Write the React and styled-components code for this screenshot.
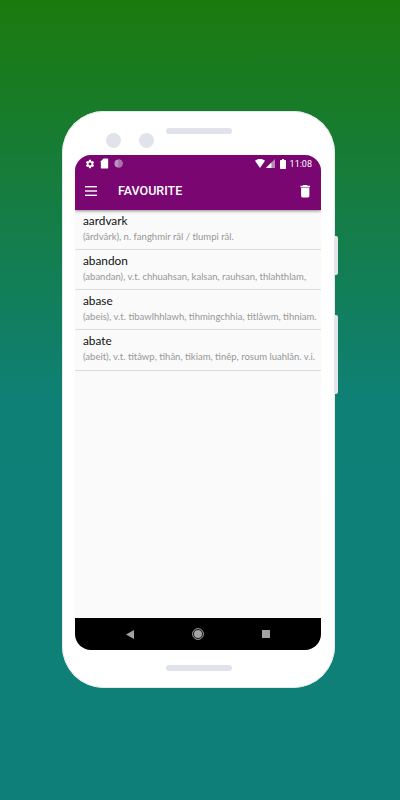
import React from "react";
import styled, { createGlobalStyle } from "styled-components";

const Global = createGlobalStyle`
  html, body {
    margin: 0;
    padding: 0;
  }
  body {
    width: 400px;
    height: 800px;
    overflow: hidden;
    font-family: "Lato", "Liberation Sans", sans-serif;
  }
`;

const Page = styled.div`
  width: 400px;
  height: 800px;
  box-sizing: border-box;
  padding: 111px 0 0 62px;
  background: linear-gradient(180deg, #1b7a0d 0%, #0f8076 50%, #0f8079 100%);
`;

const Phone = styled.div`
  position: relative;
  width: 273px;
  height: 577px;
  box-sizing: border-box;
  padding: 0 14px 0 13px;
  background: #fff;
  border-radius: 42px;
  box-shadow: inset 0 0 0 1px #e6e8ec;
  display: flex;
  flex-direction: column;
`;

const SideButton = styled.div`
  position: absolute;
  right: -3px;
  top: ${(p) => p.$top}px;
  width: 3px;
  height: ${(p) => p.$height}px;
  background: #e3e5ea;
  border-radius: 0 2px 2px 0;
`;

const TopBezel = styled.div`
  height: 44px;
  display: flex;
  align-items: flex-start;
  padding: 17px 0 0 31px;
  box-sizing: border-box;
`;

const BottomBezel = styled.div`
  padding-top: 15px;
  display: flex;
`;

const Camera = styled.div`
  width: 15px;
  height: 15px;
  margin-top: 5px;
  margin-right: 18px;
  border-radius: 50%;
  background: #e0e3e9;
`;

const Speaker = styled.div`
  width: 66px;
  height: 6px;
  background: #e0e3e9;
  border-radius: 3px;
  margin-left: ${(p) => p.$left || 0}px;
`;

const Screen = styled.div`
  width: 246px;
  height: 495px;
  border-radius: 16px;
  overflow: hidden;
  display: flex;
  flex-direction: column;
  background: #fafafa;
`;

const Header = styled.div`
  background: #7a0672;
  box-shadow: 0 1px 3px rgba(0, 0, 0, 0.45);
  position: relative;
  z-index: 1;
`;

const StatusBar = styled.div`
  height: 17px;
  display: flex;
  align-items: center;
  padding: 0 9px 0 10px;
  color: #fff;
  gap: 4px;
`;

const SignalGroup = styled.div`
  display: flex;
  align-items: center;
  gap: 1px;
  margin-right: 1px;
`;

const Clock = styled.span`
  font-family: "Roboto", sans-serif;
  font-size: 9px;
  color: #fff;
`;

const Spacer = styled.div`
  flex: 1;
`;

const Toolbar = styled.div`
  height: 37.5px;
  display: flex;
  align-items: center;
  padding: 0 7.5px 0 10px;
`;

const Title = styled.div`
  font-family: "Roboto", sans-serif;
  font-weight: 500;
  font-size: 12.5px;
  color: #fff;
  margin-left: 21px;
`;

const List = styled.div`
  flex: 1;
  min-height: 0;
`;

const Row = styled.div`
  height: 40.3px;
  box-sizing: border-box;
  padding: 3px 8px 0;
  border-bottom: 1px solid #dddddd;
  overflow: hidden;
`;

const Word = styled.div`
  font-size: 11.8px;
  line-height: 15px;
  color: #111;
  white-space: nowrap;
`;

const Meaning = styled.div`
  font-size: 9.5px;
  line-height: 14px;
  margin-top: 2px;
  color: #979797;
  white-space: nowrap;
`;

const NavBar = styled.div`
  height: 32px;
  background: #000;
  display: flex;
  align-items: center;
  justify-content: space-between;
  padding: 0 51px;
`;

const words = [
  ["aardvark", "(ârdvârk), n. fanghmir râl / tlumpi râl."],
  ["abandon", "(abandan), v.t. chhuahsan, kalsan, rauhsan, thlahthlam,"],
  ["abase", "(abeis), v.t. tibawlhhlawh, tihmingchhia, titlâwm, tihniam."],
  ["abate", "(abeit), v.t. titâwp, tihân, tikiam, tinêp, rosum luahlân. v.i."],
];

const Gear = () => (
  <svg width="10" height="10" viewBox="0 0 24 24" fill="#fff">
    <path d="M19.4 13c.04-.33.06-.66.06-1s-.02-.67-.06-1l2.1-1.65c.2-.15.25-.42.13-.64l-2-3.46c-.12-.22-.39-.3-.61-.22l-2.49 1c-.52-.4-1.08-.73-1.69-.98l-.38-2.65A.49.49 0 0 0 14 2h-4c-.25 0-.46.18-.49.42l-.38 2.65c-.61.25-1.170.59-1.69.98l-2.49-1a.5.5 0 0 0-.61.22l-2 3.46c-.13.22-.07.49.12.64L4.570 11c-.04.33-.07.66-.07 1s.03.67.07 1l-2.11 1.65c-.19.15-.25.42-.12.64l2 3.46c.12.22.39.3.61.22l2.49-1c.52.4 1.08.73 1.69.98l.38 2.65c.03.24.24.42.49.42h4c.25 0 .46-.18.49-.42l.38-2.65c.61-.25 1.17-.59 1.69-.98l2.49 1c.22.08.49 0 .61-.22l2-3.46c.12-.22.07-.49-.12-.64L19.4 13zM12 15.5a3.5 3.5 0 1 1 0-7 3.5 3.5 0 0 1 0 7z" />
  </svg>
);

const SdCard = () => (
  <svg width="11" height="11" viewBox="0 0 24 24" fill="#fff">
    <path d="M18 1h-8L4 7v14c0 1.100.9 2 2 2h12c1.100 0 2-.9 2-2V3c0-1.100-.9-2-2-2z" />
  </svg>
);

const Dot = () => (
  <svg width="9" height="9" viewBox="0 0 10 10">
    <circle cx="5" cy="5" r="4.5" fill="#c08fc0" />
    <path d="M5 .5a4.5 4.5 0 0 1 0 9z" fill="#a873a8" />
  </svg>
);

const Wifi = () => (
  <svg width="10" height="9" viewBox="0 0 24 20" preserveAspectRatio="none" fill="#fff">
    <path d="M12 20 0 4c3.200-2.500 7.400-4 12-4s8.800 1.500 12 4z" />
  </svg>
);

const Signal = () => (
  <svg width="9" height="9" viewBox="0 0 20 20">
    <path d="M20 0v20H0z" fill="#b98ab6" />
    <path d="M12 8v12H0z" fill="#fff" />
  </svg>
);

const Battery = () => (
  <svg width="6" height="10" viewBox="0 0 12 20" fill="#fff">
    <path d="M4 0h4v2h2.500c.8 0 1.500.7 1.500 1.500v15c0 .8-.7 1.500-1.500 1.500h-9C.7 20 0 19.300 0 18.500v-15C0 2.700.7 2 1.500 2H4z" />
  </svg>
);

const Menu = () => (
  <svg width="12" height="10" viewBox="0 0 12 10" fill="#fff">
    <rect y="0" width="12" height="1.400" />
    <rect y="4.300" width="12" height="1.400" />
    <rect y="8.600" width="12" height="1.400" />
  </svg>
);

const Trash = () => (
  <svg width="16.5" height="16.5" viewBox="0 0 24 24" fill="#fff">
    <path d="M6 19c0 1.100.9 2 2 2h8c1.100 0 2-.9 2-2V7H6v12zM19 4h-3.500l-1-1h-5l-1 1H5v2h14V4z" />
  </svg>
);

const Back = () => (
  <svg width="8" height="9" viewBox="0 0 8 9" fill="#a3a3a3">
    <path d="M8 0v9L0 4.500z" />
  </svg>
);

const Home = () => (
  <svg width="12" height="12" viewBox="0 0 12 12">
    <circle cx="6" cy="6" r="5.400" fill="none" stroke="#a3a3a3" strokeWidth="1" />
    <circle cx="6" cy="6" r="4" fill="#a3a3a3" />
  </svg>
);

const Recent = () => (
  <svg width="8" height="8" viewBox="0 0 8 8" fill="#a3a3a3">
    <rect width="8" height="8" />
  </svg>
);

const App = () => {
  return (
    <Page>
      <Global />
      <Phone>
        <SideButton $top={125} $height={39} />
        <SideButton $top={204} $height={79} />
        <TopBezel>
          <Camera />
          <Camera />
          <Speaker $left={-6} />
        </TopBezel>
        <Screen>
          <Header>
            <StatusBar>
              <Gear />
              <SdCard />
              <Dot />
              <Spacer />
              <SignalGroup>
                <Wifi />
                <Signal />
              </SignalGroup>
              <Battery />
              <Clock>11:08</Clock>
            </StatusBar>
            <Toolbar>
              <Menu />
              <Title>FAVOURITE</Title>
              <Spacer />
              <Trash />
            </Toolbar>
          </Header>
          <List>
            {words.map(([word, meaning]) => (
              <Row key={word}>
                <Word>{word}</Word>
                <Meaning>{meaning}</Meaning>
              </Row>
            ))}
          </List>
          <NavBar>
            <Back />
            <Home />
            <Recent />
          </NavBar>
        </Screen>
        <BottomBezel>
          <Speaker $left={91} />
        </BottomBezel>
      </Phone>
    </Page>
  );
};

export default App;
